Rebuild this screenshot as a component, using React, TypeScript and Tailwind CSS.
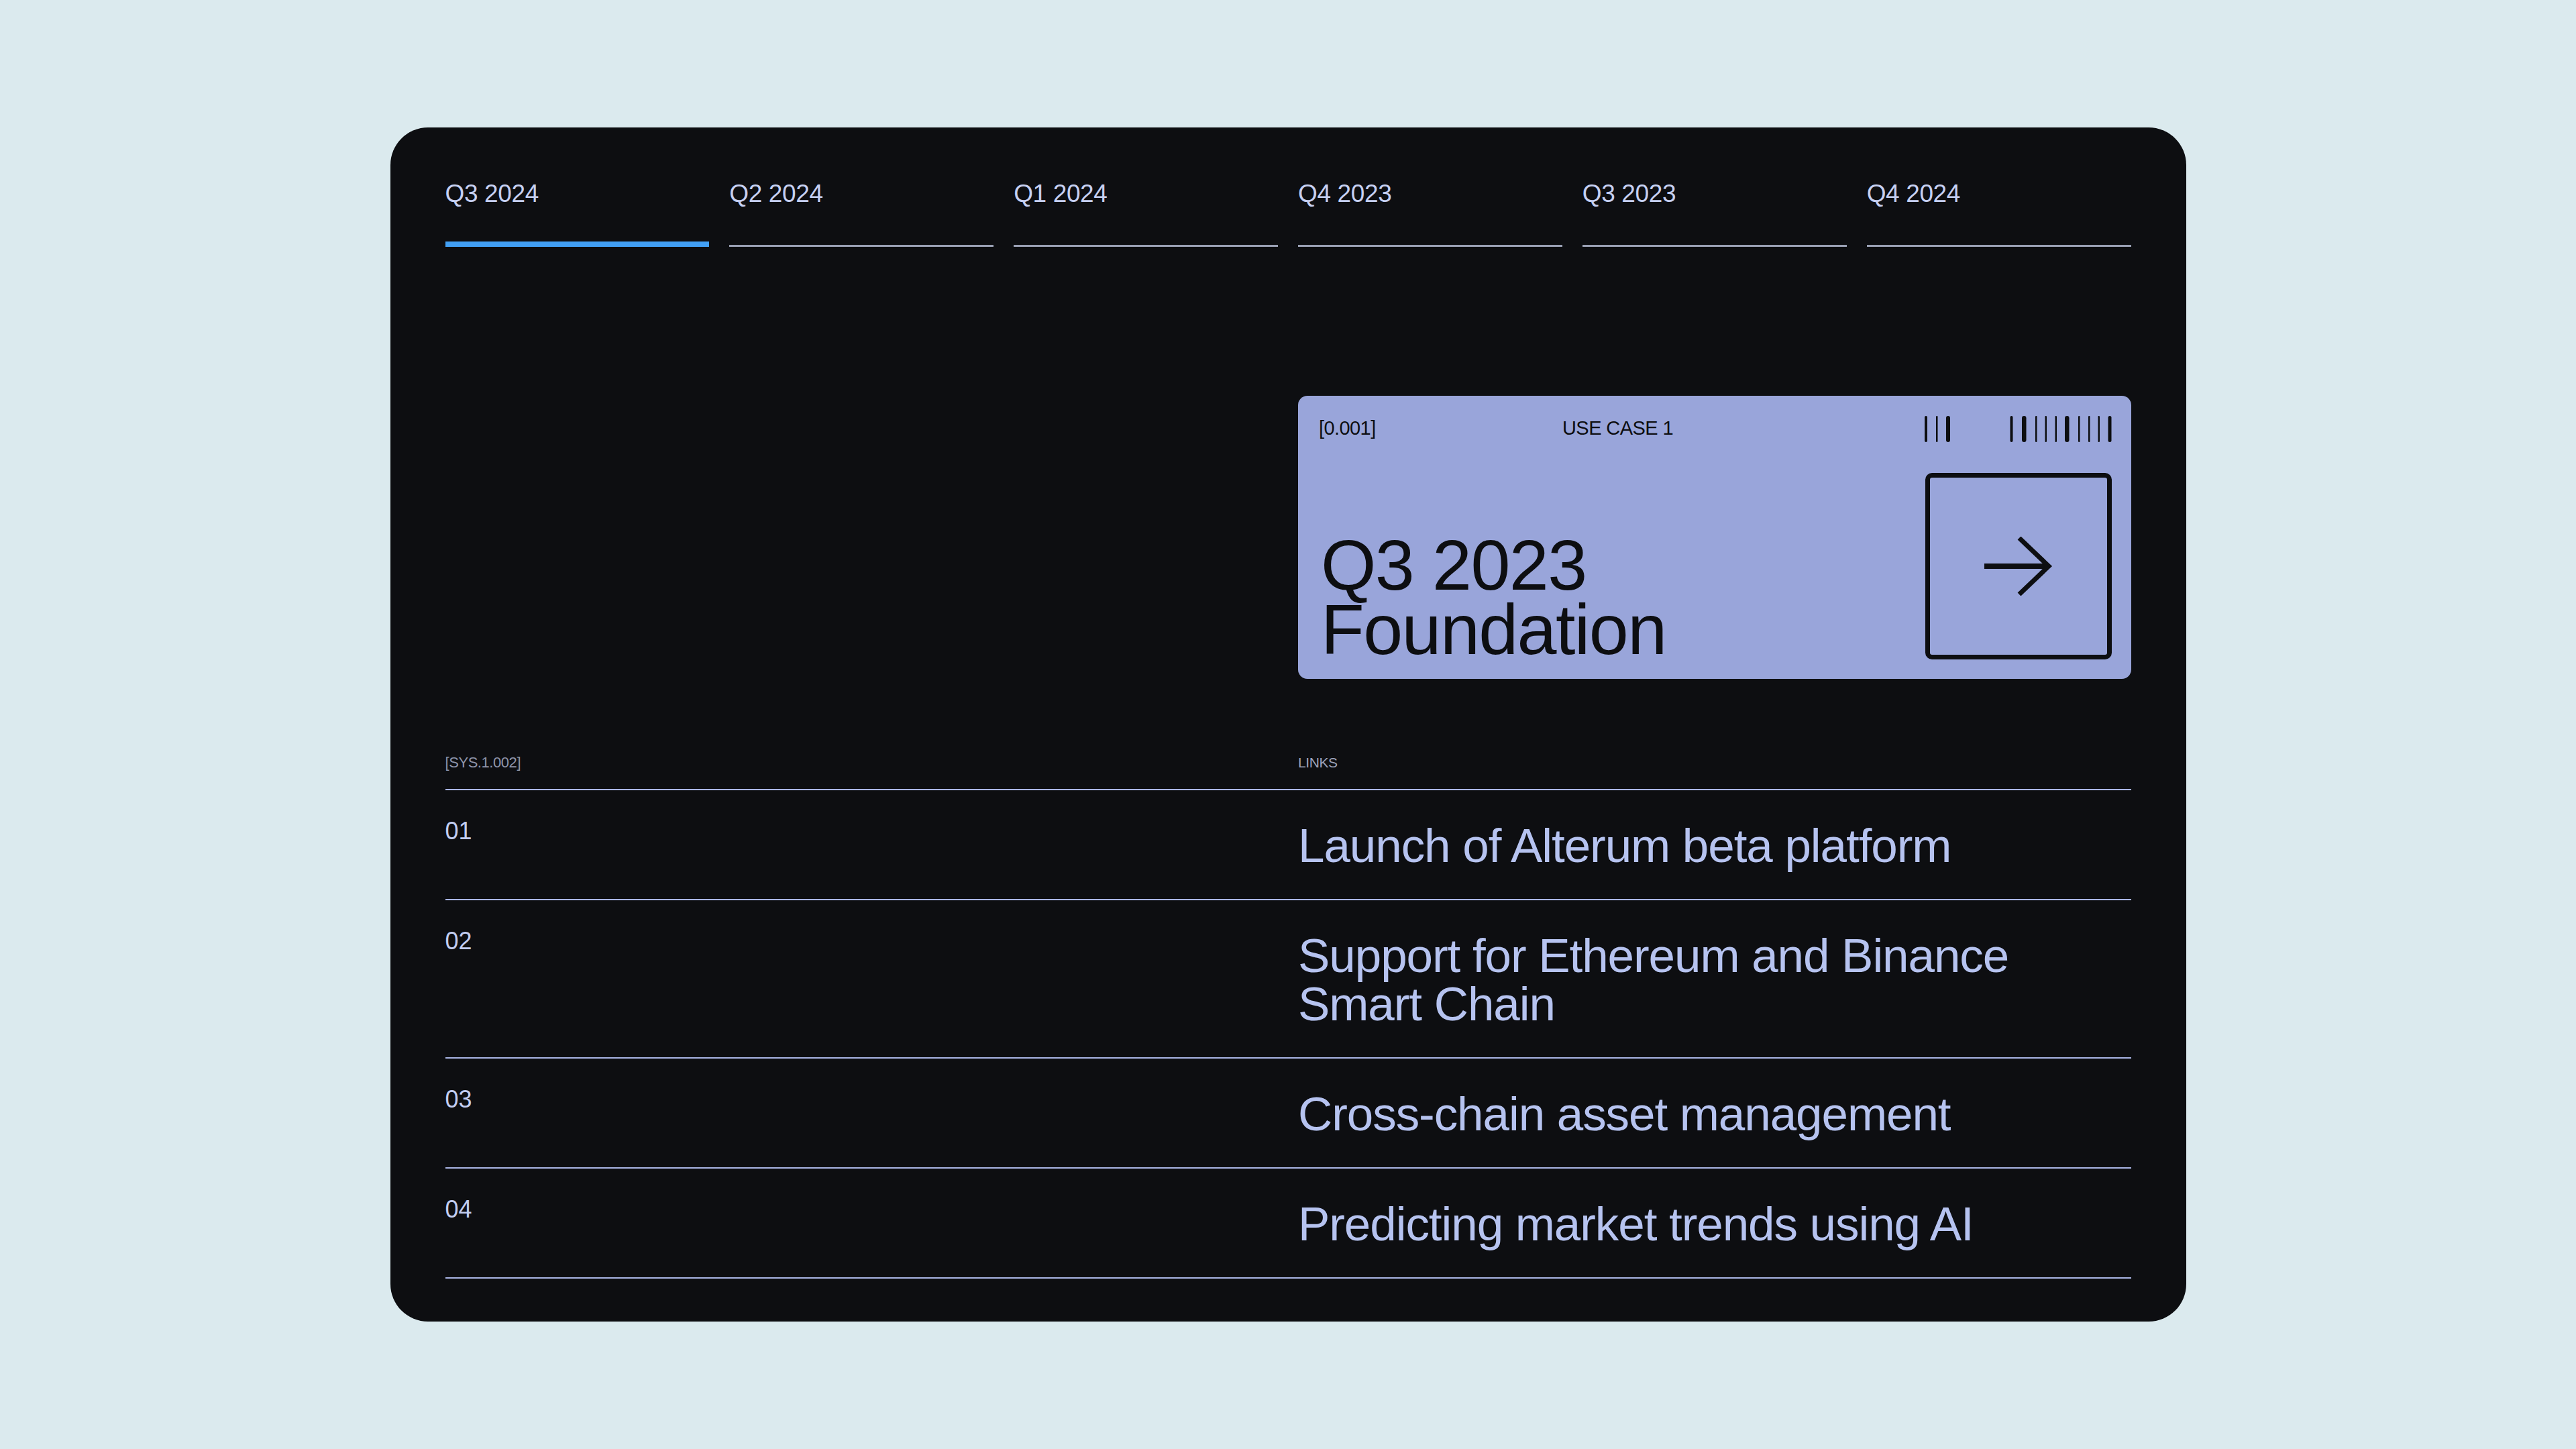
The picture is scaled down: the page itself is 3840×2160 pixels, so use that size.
import React from "react";

const tabs = ["Q3 2024", "Q2 2024", "Q1 2024", "Q4 2023", "Q3 2023", "Q4 2024"];

const rows = [
  { n: "01", t: "Launch of Alterum beta platform" },
  { n: "02", t: "Support for Ethereum and Binance Smart Chain" },
  { n: "03", t: "Cross-chain asset management" },
  { n: "04", t: "Predicting market trends using AI" },
];

const bars: [number, number][] = [
  [0, 4],
  [17, 2.5],
  [32, 6],
  [127.5, 4],
  [145, 6.5],
  [165, 2.5],
  [179.5, 2.5],
  [194.5, 2.5],
  [209, 6.5],
  [229, 2.5],
  [244, 2.5],
  [258.5, 2.5],
  [273.5, 5],
];

function Barcode() {
  return (
    <svg width="279" height="39" viewBox="0 0 279 39" className="block">
      {bars.map(([x, w], i) => (
        <rect key={i} x={x} y={0} width={w} height={39} rx={w / 2} fill="#0d0e11" />
      ))}
    </svg>
  );
}

function Arrow() {
  return (
    <svg width="102" height="88" viewBox="0 0 102 88" className="block">
      <path d="M0 44 H96" stroke="#0d0e11" strokeWidth="8" fill="none" />
      <path d="M52 2 L96 44 L52 86" stroke="#0d0e11" strokeWidth="7" fill="none" strokeLinejoin="miter" />
    </svg>
  );
}

export default function App() {
  return (
    <div className="min-h-screen w-full bg-[#dbeaee] flex items-center justify-center font-['Liberation_Sans',Arial,sans-serif]">
      <div className="w-[2677px] rounded-[56px] bg-[#0d0e11] px-[82px] pt-[80px] pb-[64px]">
        {/* Tabs */}
        <div className="grid grid-cols-6 gap-[30px]">
          {tabs.map((t, i) => (
            <div key={t} className="flex flex-col">
              <div className="text-[37px] leading-none tracking-[-0.01em] text-[#c6d0f2]">{t}</div>
              <div className="mt-[53px] h-[8px] flex items-end">
                {i === 0 ? (
                  <div className="h-[8px] w-full bg-[#42a0f5]" />
                ) : (
                  <div className="h-[3px] w-full bg-[#9aa0b4]" />
                )}
              </div>
            </div>
          ))}
        </div>

        {/* Use case card */}
        <div className="mt-[222px] grid grid-cols-2 gap-[30px]">
          <div />
          <div className="rounded-[14px] bg-[#99a5da] p-[29px] flex flex-col text-[#0d0e11]">
            <div className="flex items-center h-[39px]">
              <div className="w-[365px] pl-[2px] text-[29px] leading-none tracking-[-0.02em]">[0.001]</div>
              <div className="text-[29px] leading-none tracking-[-0.02em]">USE CASE 1</div>
              <div className="ml-auto mt-[2px]">
                <Barcode />
              </div>
            </div>
            <div className="mt-[47px] flex items-end justify-between">
              <div className="pl-[5px] mb-[-3px] text-[106px] leading-[96px] tracking-[-0.015em]">
                <div>Q3 2023</div>
                <div>Foundation</div>
              </div>
              <div className="w-[278px] h-[278px] border-[7px] border-[#0d0e11] rounded-[10px] flex items-center justify-center">
                <Arrow />
              </div>
            </div>
          </div>
        </div>

        {/* Header labels */}
        <div className="mt-[114px] grid grid-cols-2 gap-[30px] pb-[28px] border-b-2 border-[#aab6e6]">
          <div className="text-[22px] leading-none tracking-[-0.02em] text-[#8f95ab]">[SYS.1.002]</div>
          <div className="text-[21px] leading-none tracking-[-0.02em] text-[#9ea4bc]">LINKS</div>
        </div>

        {/* Rows */}
        {rows.map((r) => (
          <div key={r.n} className="grid grid-cols-2 gap-[30px] pt-[43px] pb-[43px] border-b-2 border-[#aab6e6]">
            <div className="text-[36px] leading-none text-[#c2cdf1]">{r.n}</div>
            <div className="mt-[4px] text-[71px] leading-[72px] tracking-[-0.015em] text-[#b6c3f0]">{r.t}</div>
          </div>
        ))}
      </div>
    </div>
  );
}
